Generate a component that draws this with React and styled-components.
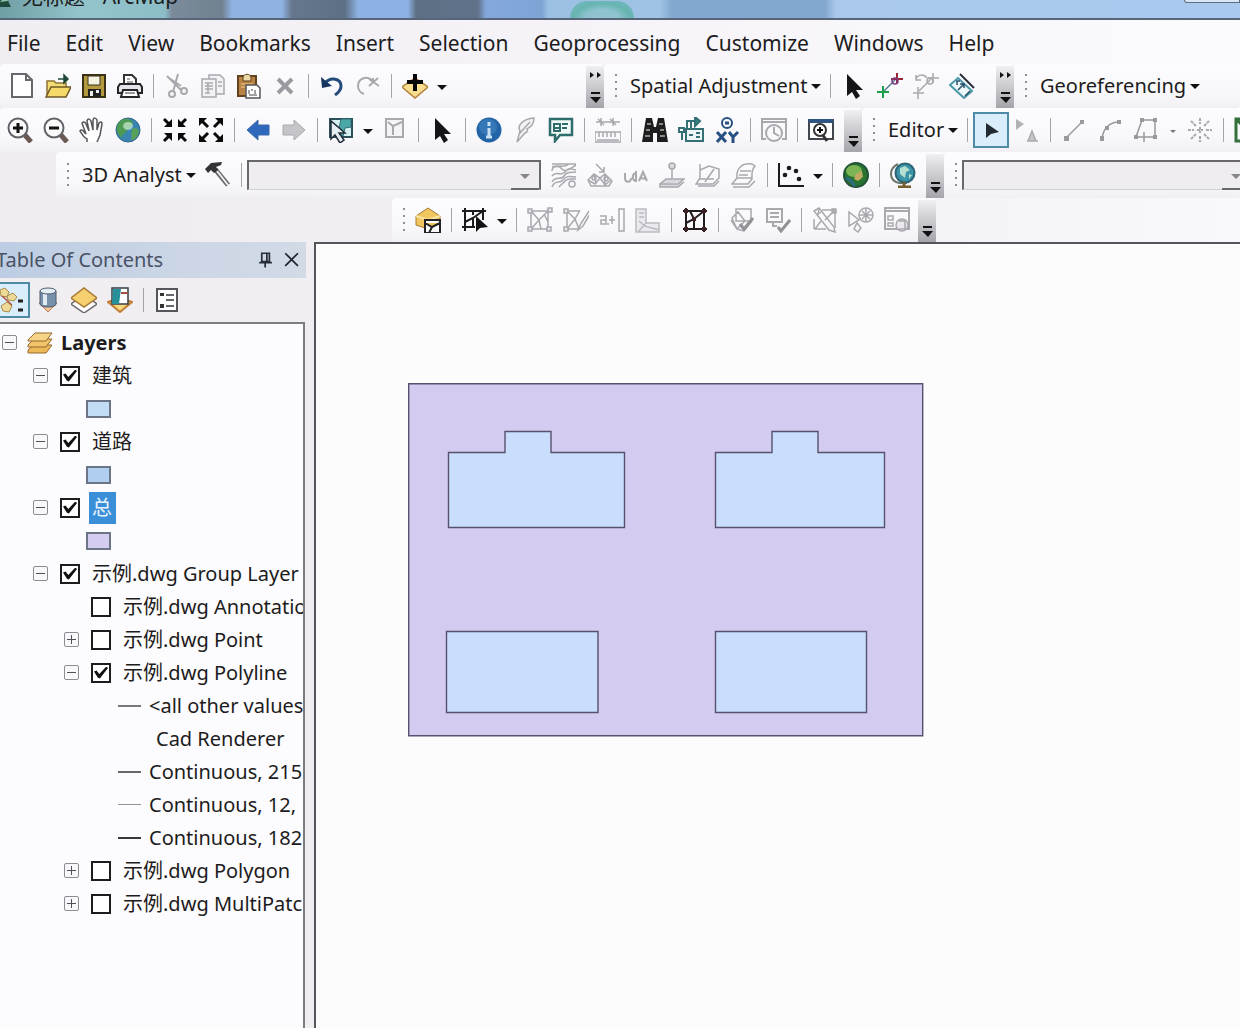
import { useState } from 'react';
import styled, { createGlobalStyle } from 'styled-components';

const GlobalStyle = createGlobalStyle`
  * {
    box-sizing: border-box;
  }

  body {
    margin: 0;
    background: #f0eef1;
    color: #1c1c20;
    font-family: "Noto Sans", "Noto Sans CJK SC", sans-serif;
    font-size: 20px;
    line-height: 28px;
  }

  button, select, input {
    margin: 0;
    padding: 0;
    border: 0;
    border-radius: 0;
    background: none;
    color: inherit;
    font: inherit;
  }
`;

const Window = styled.div`
  display: flex;
  flex-direction: column;
  min-height: 100vh;
  overflow: hidden;
`;

const TitleBar = styled.header`
  display: flex;
  align-items: flex-end;
  justify-content: space-between;
  height: 20px;
  overflow: hidden;
  border-bottom: 2px solid #566577;
  background: linear-gradient(90deg,
    #6f9fa5 0, #94c4cb 80px, #8cbec8 165px, #7b8b9b 172px, #71818f 222px,
    #8fb2e2 232px, #8fb2e2 282px, #66778c 292px, #5d7086 345px,
    #8db1e3 358px, #8db1e3 408px, #5d7086 416px, #5f7289 478px,
    #84a8dc 486px, #7ea4d6 542px, #9bc0e4 548px, #a0c3e5 660px,
    #83a8cf 672px, #83a8cf 825px, #a9c8ec 836px, #a9c9f0 100%);
`;

const TitleText = styled.h1`
  display: flex;
  align-items: center;
  gap: 10px;
  margin: 0 0 8px;
  font-size: 21px;
  font-weight: 400;
  white-space: pre;
`;

const TitleGlow = styled.span`
  flex: none;
  width: 64px;
  height: 17px;
  margin-left: 392px;
  margin-right: auto;
  border-radius: 32px 32px 0 0;
  background: radial-gradient(ellipse at bottom, #8fc3d0 0 35%, #66b5b0 60%, #7db8cb 100%);
`;

const WindowButtons = styled.div`
  display: flex;
  align-self: flex-start;
  width: 56px;
  height: 3px;
  border: 1px solid #5d6d80;
  border-top: 0;
  border-radius: 0 0 0 5px;
  background: #d9e6f5;
`;

const MenuBar = styled.nav`
  display: flex;
  height: 44px;
  padding: 2px 0 0 7px;
  gap: 25px;
  background: linear-gradient(90deg, #f0eef2, #f6f4f8 50%, #fbfafc);
`;

const MenuItem = styled.button`
  font-size: 21px;
  white-space: nowrap;
`;

const ToolbarRow = styled.div`
  display: flex;
  height: ${p => p.$height || 44}px;
  padding-left: ${p => p.$indent || 0}px;
  overflow: hidden;
  background: linear-gradient(90deg, #efedf0, #f1eff3 60%, #f9f8fb);
`;

const Toolbar = styled.div`
  display: flex;
  flex: ${p => (p.$grow ? '1 0 auto' : 'none')};
  align-items: center;
  width: ${p => (p.$width ? `${p.$width}px` : 'auto')};
  padding-left: ${p => p.$start || 0}px;
  border-radius: 4px;
  background: linear-gradient(#fcfbfd, #f8f7fa 70%, #f1eff3);
`;

const ToolButton = styled.button`
  display: flex;
  flex: none;
  align-items: center;
  justify-content: center;
  width: 36px;
  height: 36px;
  border: ${p => (p.$active ? '2px solid #4f8ba6' : '0')};
  background: ${p => (p.$active ? '#d9eefa' : 'none')};
`;

const Separator = styled.span`
  flex: none;
  width: 1px;
  height: 24px;
  margin: 0 5px;
  background: #a5a4aa;
`;

const Grip = styled.span`
  flex: none;
  width: 2px;
  height: 24px;
  margin: 0 ${p => (p.$tight ? 5 : 11)}px 0 11px;
  background: repeating-linear-gradient(#8d8d95 0 2px, transparent 2px 7px);
`;

const LabelButton = styled.button`
  display: flex;
  flex: none;
  align-items: center;
  gap: 4px;
  padding: 0 4px 0 2px;
  font-size: 20px;
  white-space: nowrap;

  &::after {
    content: '';
    border: 5px solid transparent;
    border-top-color: #111;
    border-bottom: 0;
  }
`;

const DropButton = styled.button`
  flex: none;
  width: 18px;
  height: 36px;

  &::after {
    content: '';
    display: inline-block;
    vertical-align: middle;
    border: ${p => (p.disabled ? 3 : 5)}px solid transparent;
    border-top-color: ${p => (p.disabled ? '#77767c' : '#111')};
    border-bottom: 0;
  }
`;

const OverflowButton = styled.button`
  display: flex;
  flex: none;
  flex-direction: column;
  align-items: center;
  align-self: stretch;
  justify-content: ${p => (p.$more ? 'space-between' : 'flex-end')};
  width: 18px;
  margin: 2px 0 0 auto;
  padding: 6px 0 4px;
  background: linear-gradient(#f0eff2, #c9c9ce 50%, #a4a5ab);
`;

const ComboWrap = styled.div`
  display: flex;
  flex: none;
  align-items: center;
  justify-content: flex-end;
  position: relative;
  width: ${p => p.$width}px;
  height: 30px;
  margin-right: 5px;
  border-top: 2px solid #68686e;
  border-left: 2px solid #68686e;
  border-right: 2px solid #68686e;
  border-bottom: 1px solid #d0cfd4;
  background: #efedf0;
`;

const ComboSelect = styled.select`
  flex: 1;
  height: 100%;
  appearance: none;
`;

const ComboArrow = styled.span`
  position: absolute;
  right: 0;
  bottom: -1px;
  width: 28px;
  height: 20px;
  border-bottom: 2px solid #68686e;
  pointer-events: none;

  &::after {
    content: '';
    display: block;
    width: 0;
    margin: 4px auto 0;
    border: 5px solid transparent;
    border-top-color: #85858c;
    border-bottom: 0;
  }
`;

const Workspace = styled.main`
  display: flex;
  flex: 1;
`;

const ContentsPanel = styled.aside`
  display: flex;
  flex: none;
  flex-direction: column;
  width: 306px;
  margin-right: 8px;
`;

const PanelHeader = styled.div`
  display: flex;
  align-items: center;
  height: 36px;
  padding-right: 1px;
  overflow: hidden;
  background: linear-gradient(90deg, #bccde3, #ccd6e5 60%, #d2dae6);
`;

const PanelTitle = styled.h2`
  flex: 1;
  margin: 0 0 0 -4px;
  color: #4a5265;
  font-size: 20px;
  font-weight: 400;
`;

const PanelButton = styled.button`
  display: flex;
  align-items: center;
  justify-content: center;
  width: 26px;
  height: 28px;
`;

const PanelTools = styled.div`
  display: flex;
  align-items: center;
  height: 44px;
  margin-left: -6px;
`;

const Tree = styled.ul`
  flex: 1;
  width: 305px;
  margin: 0;
  padding: 2px 0 0;
  overflow: hidden;
  border-top: 2px solid #7c7c83;
  border-right: 2px solid #7c7c83;
  background: #fcfbfd;
  list-style: none;
`;

const TreeRow = styled.li`
  display: flex;
  align-items: center;
  gap: ${p => p.$gap || 12}px;
  height: 33px;
  padding-left: ${p => p.$indent}px;
  white-space: nowrap;
`;

const Expander = styled.button`
  flex: none;
  width: 15px;
  height: 15px;
  border: 1px solid #8c8c94;
  border-radius: 2px;
  background:
    linear-gradient(#50505c, #50505c) center / 9px 1px no-repeat,
    linear-gradient(#50505c, #50505c) center / 1px ${p => (p.$open ? 0 : 9)}px no-repeat,
    #f8f7fa;
`;

const ExpanderSpace = styled.span`
  flex: none;
  width: 15px;
`;

const CheckBox = styled.input`
  display: flex;
  flex: none;
  align-items: center;
  justify-content: center;
  width: 20px;
  height: 20px;
  border: 2px solid #1d1d1f;
  background: #fff;
  appearance: none;

  &:checked::before {
    content: '';
    width: 14px;
    height: 12px;
    background: #111;
    clip-path: polygon(0 42%, 18% 34%, 38% 62%, 88% 0, 100% 12%, 42% 100%, 28% 94%);
  }
`;

const LayerLabel = styled.label`
  margin-left: ${p => (p.$selected ? '-3px' : '0')};
  padding: ${p => (p.$selected ? '2px 4px 2px 3px' : '0')};
  background: ${p => (p.$selected ? '#3b8fd8' : 'none')};
  color: ${p => (p.$selected ? '#e8f5ff' : 'inherit')};
`;

const GroupLabel = styled.strong`
  margin-left: -2px;
  font-weight: 700;
`;

const Swatch = styled.span`
  width: 25px;
  height: 18px;
  border: 2px solid #6c7488;
  background: ${p => p.$color};
`;

const LineSymbol = styled.span`
  flex: none;
  width: 23px;
  height: ${p => p.$weight}px;
  background: ${p => p.$color};
`;

const MapView = styled.section`
  flex: 1;
  padding: 139px 0 0 92px;
  overflow: hidden;
  border-top: 2px solid #55555b;
  border-left: 2px solid #55555b;
  background: #fcfcfd;
`;

const G = '#a9a8ae';

const ICONS = {
  newDoc: <path d="M3 1h14l6 6v17H3zM17 1v6h6" fill="#fff" stroke="#67676d" strokeWidth="2" />,
  open: (
    <>
      <path d="M2 24V8h7l2 2h10v5" fill="#f4dc74" stroke="#8b7336" strokeWidth="1.5" />
      <path d="M1 24l5-10h20l-5 10z" fill="#f7d96a" stroke="#6f5a25" strokeWidth="1.5" />
      <path d="M13 6h8M19 2l4 4-4 4z" fill="#1f4a38" stroke="#1f4a38" strokeWidth="1.5" />
    </>
  ),
  save: (
    <>
      <path d="M2 2h22v22H2z" fill="#b39a3e" stroke="#3a3117" strokeWidth="2" />
      <path d="M7 3h12v9H7z" fill="#f7f3e2" stroke="#3a3117" />
      <path d="M7 16h13v8H7z" fill="#222" />
      <path d="M9 18h3v5H9zM15 17h3v3h-3z" fill="#eee" />
    </>
  ),
  print: (
    <>
      <path d="M7 12V2h8l4 4v6" fill="#fff" stroke="#333" strokeWidth="2" />
      <path d="M10 6h3M10 9h6" stroke="#555" />
      <path d="M3 11h20l2 3v6H1v-6z" fill="#e4e4e8" stroke="#26262a" strokeWidth="2" />
      <path d="M6 17h14l2 7H4z" fill="#fff" stroke="#26262a" strokeWidth="2" />
      <path d="M8 20h10" stroke="#333" />
    </>
  ),
  cut: (
    <g fill="none" stroke={G} strokeWidth="2">
      <path d="M3 3l15 15M14 1l-5 18M5 5l12 8" />
      <circle cx="8" cy="21" r="3" />
      <circle cx="20" cy="18" r="3" />
    </g>
  ),
  copy: (
    <g fill="#f3f2f5" stroke={G} strokeWidth="1.5">
      <path d="M9 2h11l4 4v15H9z" />
      <path d="M2 6h14v18H2zM5 10h8M5 13h8M5 16h8M5 20h5M18 9h4M18 13h4M8 10v9" />
    </g>
  ),
  paste: (
    <>
      <path d="M2 3h18v20H2z" fill="#b98344" stroke="#60421f" strokeWidth="2" />
      <path d="M7 5c0-5 8-5 8 0v3H7z" fill="#ead8a4" stroke="#60421f" />
      <path d="M5 11h12M5 14h4" stroke="#f0cf95" />
      <path d="M10 12h11l3 3v10H10z" fill="#fff" stroke="#55555a" strokeWidth="1.5" />
      <path d="M13 17v4M16 16v2M19 17v4M13 22h8" stroke="#444" />
    </>
  ),
  remove: <path d="M6 6l14 14M20 6L6 20" stroke="#9b9aa1" strokeWidth="4" />,
  undo: (
    <>
      <path d="M6 10C12 3 22 6 22 13c0 4-3 7-6 9" fill="none" stroke="#244a7b" strokeWidth="3" />
      <path d="M2 4l1 11 10-2z" fill="#17345e" />
    </>
  ),
  redo: (
    <>
      <path d="M17 7C11 2 3 6 3 13c0 4 3 7 6 8" fill="none" stroke={G} strokeWidth="2" />
      <path d="M14 6l10 7M23 5l-9 8M18 5v4" stroke={G} strokeWidth="2" />
    </>
  ),
  addData: (
    <>
      <path d="M0 14l13-9 13 9-13 11z" fill="#f8dd8e" stroke="#b28138" strokeWidth="1.5" />
      <path d="M13 1v17M5 9h16" stroke="#050505" strokeWidth="4" />
    </>
  ),
  pointer: <path d="M6 1v22l5-4 4 7 4-3-4-6h7z" fill="#151517" />,
  linkAdd: (
    <>
      <path d="M6 19L18 7" stroke="#53798a" strokeWidth="1.5" />
      <path d="M0 19h12M6 13v12" stroke="#1ea04a" strokeWidth="2" />
      <path d="M14 6h12M20 0v11" stroke="#9c2437" strokeWidth="2" />
      <circle cx="18" cy="8" r="3" fill="none" stroke="#7a3d86" strokeWidth="1.5" />
    </>
  ),
  linkEdit: (
    <g fill="none" stroke={G} strokeWidth="1.5">
      <path d="M0 20h11M5 14v12M6 18l12-12M15 5h11M20 0v10M3 6c2-5 8-5 11-1M3 2v5h5" />
      <circle cx="17" cy="8" r="3" />
    </g>
  ),
  rotateLink: (
    <>
      <path d="M1 12l8-7 14 13-8 7z" fill="#eef8fa" stroke="#4c98aa" strokeWidth="2" />
      <path d="M11 1l14 14" stroke="#29303d" strokeWidth="2" />
      <path d="M9 17l6-6M11 11h4v4M16 23l5-5M8 12V8h3" stroke="#28506b" strokeWidth="1.5" />
    </>
  ),
  zoomIn: (
    <>
      <path d="M17 17l7 8" stroke="#695a55" strokeWidth="5" />
      <circle cx="11" cy="11" r="9.5" fill="#fafafa" stroke="#626269" strokeWidth="2" />
      <path d="M11 6v10M6 11h10" stroke="#111" strokeWidth="3" />
    </>
  ),
  zoomOut: (
    <>
      <path d="M17 17l7 8" stroke="#695a55" strokeWidth="5" />
      <circle cx="11" cy="11" r="9.5" fill="#fafafa" stroke="#626269" strokeWidth="2" />
      <path d="M6 11h10" stroke="#111" strokeWidth="3" />
    </>
  ),
  pan: (
    <path
      d="M8 25v-3c-3-1-5-5-7-8 1-2 3-1 5 2l1 1-4-11c1-2 3-1 4 1l3 7-2-10c1-3 3-2 4 0l2 9V3c1-3 3-2 4 0v10l2-7c2-2 3-1 3 1l-2 11-3 7"
      fill="#fff"
      stroke="#55555b"
      strokeWidth="1.5"
    />
  ),
  globe: (
    <>
      <circle cx="13" cy="13" r="12" fill="#3a84b1" stroke="#31678b" />
      <path d="M5 4c5-4 12-2 13 2-2 2-1 4-4 5s-1 4-4 5-3 5-3 5C1 17 0 9 5 4z" fill="#4d9a52" />
      <path d="M18 11c3 0 6 1 6 3-1 6-4 9-8 9 1-4-1-8 2-12z" fill="#57a05a" />
      <ellipse cx="13" cy="9" rx="5" ry="4" fill="#c2e6ce" opacity="0.75" />
    </>
  ),
  shrink: (
    <>
      <path d="M2 2l6 6M24 2l-6 6M2 24l6-6M24 24l-6-6" stroke="#0a0a0a" strokeWidth="3" />
      <path d="M10 2v8H2zM16 2v8h8zM10 24v-8H2zM16 24v-8h8z" fill="#0a0a0a" />
    </>
  ),
  expand: (
    <>
      <path d="M3 3l7 7M23 3l-7 7M3 23l7-7M23 23l-7-7" stroke="#0a0a0a" strokeWidth="3" />
      <path d="M1 1h8L1 9zM25 1h-8l8 8zM1 25h8l-8-8zM25 25h-8l8-8z" fill="#0a0a0a" />
    </>
  ),
  back: <path d="M2 13L13 3v5h11v10H13v5z" fill="#2e68bd" stroke="#3f6aa8" />,
  forward: <path d="M24 13L13 3v5H2v10h11v5z" fill="#c5c4c9" stroke="#aaa9af" />,
  selectFeature: (
    <>
      <path d="M2 2h22v18H2z" fill="#d6eff0" stroke="#2d4f5c" strokeWidth="2" />
      <path d="M13 2h10v8l-6 1-2 8-5-3z" fill="#4aa9a8" stroke="#2d6d74" />
      <path d="M3 4v18l4-4 5 8 4-3-5-7h6z" fill="#e5eef2" stroke="#202c39" strokeWidth="1.5" />
    </>
  ),
  clearSelect: (
    <g fill="#f4f3f6" stroke={G} strokeWidth="2">
      <path d="M4 2h17v18H4zM6 5l5 4 9-4M11 9v9" />
    </g>
  ),
  identify: (
    <>
      <circle cx="13" cy="13" r="12.5" fill="#2364a6" />
      <ellipse cx="12" cy="10" rx="9" ry="8" fill="#4384c3" opacity="0.6" />
      <path d="M13 5v4M13 11v9M10 20h6" stroke="#c9e0f3" strokeWidth="3" />
    </>
  ),
  hyperlink: <path d="M22 1C10 2 5 9 8 14l-3 11 8-9c3-1 3-3 2-4l3-2c2-1 4-5 4-9zM7 17L18 5" fill="#f1f0f3" stroke={G} strokeWidth="1.5" />,
  popup: (
    <>
      <path d="M2 2h22v16H12l-5 6v-6H2z" fill="#f2faf8" stroke="#2e6d6b" strokeWidth="2.5" />
      <path d="M6 7h6v7H6zM14 7h6M14 11h5M7 11h4" fill="none" stroke="#2e6d6b" strokeWidth="2" />
    </>
  ),
  measure: (
    <g fill="none" stroke={G} strokeWidth="1.5">
      <path d="M1 5h24M6 1v8M3 2l6 6M18 1v8M15 2l6 6M0 15h26v10H0zM4 15v5M8 15v5M12 15v5M16 15v5M20 15v5M2 23h22" />
    </g>
  ),
  find: (
    <>
      <path d="M4 1h6l2 9h2l2-9h6l4 24H15v-9h-4v9H0z" fill="#1d1c1e" />
      <path d="M5 7h4M4 13h4M3 19h5M17 7h4M18 13h4M18 19h5" stroke="#8d8a86" strokeWidth="2" />
    </>
  ),
  route: (
    <g fill="none" stroke="#347076" strokeWidth="2">
      <path d="M1 11h5v4H1zM4 15v8M9 11V4h10M13 5v7" />
      <path d="M17 0l5 4-5 5z" fill="#2f8577" />
      <path d="M8 12h17v12H8z" fill="#edf7f7" />
      <path d="M11 18h4M18 16h4M18 20h4" />
    </g>
  ),
  goToXY: (
    <g fill="none" stroke="#275082" strokeWidth="3">
      <circle cx="13" cy="6" r="5" strokeWidth="2" />
      <path d="M11 6h4M3 15l9 10M12 15L3 25M15 15l4 5 5-5M19 20v6" />
    </g>
  ),
  time: (
    <g fill="none" stroke={G} strokeWidth="2">
      <path d="M5 22H1V2h24v20h-4M1 5h24" />
      <circle cx="13" cy="16" r="8" />
      <path d="M13 10v6l5 3" />
    </g>
  ),
  viewer: (
    <>
      <path d="M1 3h24v19H1z" fill="#fff" stroke="#42464f" strokeWidth="2" />
      <path d="M1 4h24" stroke="#2f5583" strokeWidth="4" />
      <path d="M14 17l5 7" stroke="#333" strokeWidth="3" />
      <circle cx="12" cy="13" r="6" fill="#fff" stroke="#333" strokeWidth="2" />
      <path d="M12 10v6M9 13h6" stroke="#111" strokeWidth="2" />
    </>
  ),
  editTool: <path d="M8 6v15l5-4 8-2z" fill="#242a31" />,
  editNote: (
    <>
      <path d="M2 2v11l8-6z" fill="#b2b0b5" />
      <path d="M14 24l4-10 4 10zM13 24h11" fill="#c6c5c9" stroke={G} strokeWidth="1.5" />
    </>
  ),
  line: (
    <>
      <path d="M5 21L21 5" stroke="#99989f" strokeWidth="1.5" />
      <path d="M3 19h5v5H3zM19 3h4v4h-4z" fill="#99989f" />
    </>
  ),
  arc: (
    <>
      <path d="M5 22C6 12 12 5 22 5" fill="none" stroke="#99989f" strokeWidth="1.5" />
      <path d="M3 19h4v5H3zM8 9h4v4H8zM20 3h4v4h-4z" fill="#99989f" />
    </>
  ),
  trapezoid: (
    <>
      <path d="M3 20L9 3h13v17M3 20h4M16 20h6M11 15v10M7 20h9" fill="none" stroke="#99989f" strokeWidth="1.5" />
      <path d="M7 1h4v4H7zM20 1h4v4h-4zM1 18h4v4H1zM20 18h4v4h-4z" fill="#99989f" />
    </>
  ),
  burst: (
    <path
      d="M13 1v6M13 19v6M1 13h6M19 13h6M4 4l5 5M22 4l-5 5M4 22l5-5M22 22l-5-5M10 13h6M13 10v6"
      stroke={G}
      strokeWidth="2"
      strokeDasharray="3 1"
    />
  ),
  greenBox: <path d="M2 2h22v22H2zM2 2l22 22" fill="none" stroke="#34703c" strokeWidth="3" />,
  hammer: (
    <>
      <path d="M10 7l13 16" stroke="#66666a" strokeWidth="5" />
      <path d="M12 9l11 14" stroke="#f2f0ee" strokeWidth="2" />
      <path d="M0 7l6-6 11-1-1 3-5 2 2 3-4 3-3-3-3 3z" fill="#333336" />
    </>
  ),
  contour: (
    <g fill="none" stroke={G} strokeWidth="1.5">
      <path d="M1 9c0-5 7-6 10-2s9-1 14-4M1 14c4-6 9 1 13-4s6-3 11-2M1 20c4-7 9-1 12-6s7-3 12-4M1 25c3-8 8-3 11-7s5-4 13-3M8 25c2-3 4-3 6-6s5-2 11-2M1 2h24M1 5c8-3 12 2 17-3" />
      <circle cx="21" cy="22" r="3" />
    </g>
  ),
  steepPath: (
    <g fill="none" stroke={G} strokeWidth="1.5">
      <path d="M9 2l8 8M17 5v5h-5M1 18l6-6 6 4 5-4 7 7-3 5H4zM1 18l7 4 5-6 5 7 6-5M7 12l2 10M18 12v11" />
      <circle cx="7" cy="16" r="2" />
      <circle cx="19" cy="17" r="2" />
    </g>
  ),
  sight: (
    <g fill="none" stroke={G} strokeWidth="2">
      <path d="M2 11v5c0 5 6 5 6 0M12 11c-4 3-2 8 1 8V9M16 19l4-9 4 9M17 16l7 1" />
    </g>
  ),
  interpolatePoint: (
    <g fill="#d9d8dd" stroke={G} strokeWidth="1.5">
      <circle cx="13" cy="4" r="3" />
      <path d="M13 7v10M7 17h18l-6 5H1zM1 22v3h18l6-5" />
    </g>
  ),
  interpolateLine: (
    <g fill="none" stroke={G} strokeWidth="1.5">
      <path d="M5 2v14l-4 6h17l6-6V7L14 4l-9 4M4 17h15M10 20l9-13M3 24h16l5-5" />
    </g>
  ),
  interpolatePolygon: (
    <g fill="none" stroke={G} strokeWidth="1.5">
      <path d="M6 16C5 5 12 1 21 2l3 2c-4 4-3 8-3 13l-4 5H1l5-6h15M9 9h11M8 13h9M2 25h16l6-6" />
    </g>
  ),
  scatter: (
    <>
      <path d="M1 1v23h25" fill="none" stroke="#1b1b1e" strokeWidth="2" />
      <circle cx="7" cy="13" r="2.300" fill="#1b1b1e" />
      <circle cx="11" cy="6" r="2.300" fill="#1b1b1e" />
      <circle cx="18" cy="9" r="2.300" fill="#1b1b1e" />
      <circle cx="21" cy="17" r="2.300" fill="#1b1b1e" />
    </>
  ),
  scene: (
    <>
      <circle cx="13" cy="13" r="12" fill="#28732f" stroke="#245238" strokeWidth="2" />
      <ellipse cx="11" cy="9" rx="8" ry="6" fill="#89bf58" opacity="0.85" />
      <path d="M13 12l6-3 1 6-5 4-4-2z" fill="#c1a964" />
      <path d="M3 16c5 1 6 5 9 8" stroke="#2b6b80" strokeWidth="3" fill="none" />
    </>
  ),
  arcGlobe: (
    <>
      <path d="M8 2C-2 7-1 19 9 21h8" fill="none" stroke="#6d786d" strokeWidth="2" />
      <circle cx="15" cy="11" r="9.5" fill="#3b93a8" stroke="#2e6576" strokeWidth="2" />
      <path d="M10 6l5-2 5 4-4 2-1 6-5-4zM19 12l3 1-3 4z" fill="#b5dfcf" />
      <path d="M14 20v4M8 25h13" stroke="#775d2e" strokeWidth="3" />
    </>
  ),
  topologyBox: (
    <>
      <path d="M1 9l12-8 12 8v12l-9 2L1 18z" fill="#f1c65e" stroke="#a87b30" />
      <path d="M1 9l12 4 12-4" fill="none" stroke="#fae5a3" strokeWidth="2" />
      <path d="M10 13h15v13H10zM10 16l7 4 8-4M17 20l-3 6" fill="#fff" stroke="#222" strokeWidth="2" />
    </>
  ),
  topologyEdit: (
    <>
      <path d="M0 4h24M0 20h13M3 1v23M21 1v12M3 15l8-4 10-7M11 11v9M11 4v4" fill="none" stroke="#1b1b1e" strokeWidth="2" />
      <path d="M14 9v16l4-4 8-1z" fill="#111" />
    </>
  ),
  topoA: (
    <g fill="none" stroke={G} strokeWidth="1.5">
      <path d="M3 4h20M3 22h20M4 2v22M21 2v22M4 4l8 9-8 9M12 13l9-9M12 13l2 9M17 7l4 8" />
      <path d="M1 2h4v4H1zM1 20h4v4H1zM21 1h4v4h-4zM20 20h4v4h-4z" fill="#e8e7ea" />
    </g>
  ),
  topoB: (
    <g fill="none" stroke={G} strokeWidth="1.5">
      <path d="M2 4h14M2 22h15M4 2v22M4 4l8 8-8 10M12 12l5-9M12 12l4 10M26 4L17 18l-2 5 5-4 7-12" />
      <path d="M1 2h4v4H1zM1 20h4v4H1z" fill="#e8e7ea" />
    </g>
  ),
  alignEdge: (
    <g fill="none" stroke={G} strokeWidth="1.5">
      <path d="M1 9h6v8H2v-4h5M10 13h6M13 9v8M20 2h5v22h-5zM8 17h2" />
    </g>
  ),
  corner: (
    <g fill="#eae9ed" stroke="#bcbbc1" strokeWidth="1.5">
      <path d="M1 2h10v14h13v9H1zM4 6h5M4 10h5M4 14l6 5 14 4M11 16L3 25" />
    </g>
  ),
  planarize: (
    <>
      <path d="M1 4h24M1 22h24M4 1v24M22 1v24M4 16l8-4 10-8M12 12v10M12 12l-4-8" fill="none" stroke="#231c1e" strokeWidth="2" />
      <path d="M2 2h4v4H2zM20 2h4v4h-4zM2 20h4v4H2zM20 20h4v4h-4zM10 10h4v4h-4z" fill="#3a2225" />
    </>
  ),
  validate: (
    <g fill="none" stroke={G} strokeWidth="1.5">
      <path d="M7 2h15v12H7zM3 11l6-6 7 9-8 8zM2 13l6 9 7 2 8-10" />
      <path d="M11 17l4 5 9-11" stroke="#929198" strokeWidth="3" />
    </g>
  ),
  validateList: (
    <g fill="none" stroke={G} strokeWidth="2">
      <path d="M2 2h15v13H2zM5 6h9M5 10h9M8 15v4h4" />
      <path d="M13 20l3 4 9-11" stroke="#929198" strokeWidth="3" />
    </g>
  ),
  fixError: (
    <g fill="none" stroke={G} strokeWidth="1.5">
      <path d="M2 22V12M10 3h13v18M2 22h12M13 13l9-9M3 22l6-8M20 2h4v4h-4z" />
      <path d="M2 4l5-3 15 19 1 5-6-2zM7 1l-1 6M5 8l4-3" />
    </g>
  ),
  inspectError: (
    <g fill="none" stroke={G} strokeWidth="1.5">
      <path d="M1 5v14l10-6zM9 16l-3 6 4 3 3-4z" />
      <circle cx="18" cy="8" r="7" />
      <path d="M14 4l8 8M22 4l-8 8M18 1v14M11 8h14" />
    </g>
  ),
  errorTable: (
    <g fill="none" stroke={G} strokeWidth="1.5">
      <path d="M1 1h24v21H1zM1 4h24" strokeWidth="2" />
      <path d="M4 9h5v4H4zM4 16h5v3H4z" />
      <circle cx="18" cy="18" r="6" fill="#eceaee" />
      <path d="M15 14h6v8h-6" />
    </g>
  ),
  listDrawing: (
    <>
      <path d="M1 3l5-2 4 4-2 5-6-1zM8 9l6-3 4 4-3 4-6-1zM2 19l6-4 5 4-3 6-6-1z" fill="#efd996" stroke="#a88d4b" />
      <path d="M3 9l10 9" stroke="#b3523e" strokeWidth="1.5" />
      <path d="M19 14h5M19 23h5" stroke="#222" strokeWidth="3" />
    </>
  ),
  listSource: (
    <>
      <path d="M4 16l9 9 9-9z" fill="#f0c59b" stroke="#b97f50" />
      <path d="M5 4v13c0 4 16 4 16 0V4z" fill="#7791ab" stroke="#4d5c6e" />
      <path d="M8 6v12h4V6z" fill="#dfeaf3" />
      <ellipse cx="13" cy="4" rx="8" ry="3" fill="#e5edf4" stroke="#4d5c6e" />
    </>
  ),
  listVisible: (
    <>
      <path d="M0 17l13-9 13 9-13 9z" fill="#fff" stroke="#68686c" strokeWidth="1.5" />
      <path d="M0 11l13-10 13 10-13 9z" fill="#f5cf70" stroke="#a77a34" strokeWidth="1.5" />
    </>
  ),
  listSelection: (
    <>
      <path d="M1 15l12 10 12-10-3-1H4z" fill="#f8d67b" stroke="#c07d34" strokeWidth="2" />
      <path d="M5 1h16v16H5z" fill="#fff" stroke="#363d45" strokeWidth="1.5" />
      <path d="M6 2h8l-2 15H5z" fill="#27919b" />
      <path d="M14 6h7" stroke="#a64d43" strokeWidth="2" />
    </>
  ),
  options: (
    <>
      <path d="M3 2h20v22H3z" fill="#fff" stroke="#55555b" strokeWidth="2" />
      <path d="M6 6h4v3H6zM6 17h4v4H6z" fill="#333" />
      <path d="M12 8h8M12 13h8M12 19h8" stroke="#66666c" strokeWidth="2" />
    </>
  ),
  layerStack: (
    <>
      <path d="M1 20l6-5h18l-6 8H1z" fill="#eeb957" stroke="#94682c" />
      <path d="M1 15l6-6h18l-6 8H1z" fill="#f1c46a" stroke="#94682c" />
      <path d="M1 10l7-7h17l-6 8H1z" fill="#f6d487" stroke="#94682c" />
    </>
  ),
  pin: <path d="M8 5h9v10H8zM14 5v10M5 16h15M12 16v6" fill="none" stroke="#272c38" strokeWidth="2" />,
  close: <path d="M5 5l15 15M20 5L5 20" stroke="#20242e" strokeWidth="2" />,
  more: <path d="M1 0v6l4-3zM8 0v6l4-3z" fill="#111" />,
  overflow: (
    <>
      <path d="M2 2h9" stroke="#111" strokeWidth="2" />
      <path d="M1 6h11l-5 6z" fill="#111" />
    </>
  ),
};

const Icon = ({ name, size = 26, box = 26 }) => (
  <svg width={size} height={size} viewBox={`0 0 ${box} ${box}`} fill="none" aria-hidden="true">
    {ICONS[name]}
  </svg>
);

// '|' is a separator, 'v' a drop-down arrow ('-' when disabled), anything else an icon name
const Tools = ({ items, active }) => items.map((item, i) => {
  if (item === '|') return <Separator key={i} />;
  if (item === 'v' || item === '-') return <DropButton key={i} disabled={item === '-'} aria-label="More choices" />;
  return (
    <ToolButton key={i} aria-label={item} $active={item === active}>
      <Icon name={item} />
    </ToolButton>
  );
});

const Overflow = ({ more }) => (
  <OverflowButton $more={more} aria-label="Toolbar options">
    {more && <Icon name="more" size={13} box={13} />}
    <Icon name="overflow" size={13} box={13} />
  </OverflowButton>
);

const Combo = ({ label, width }) => (
  <ComboWrap $width={width}>
    <ComboSelect aria-label={label} />
    <ComboArrow />
  </ComboWrap>
);

const MENUS = ['File', 'Edit', 'View', 'Bookmarks', 'Insert', 'Selection', 'Geoprocessing', 'Customize', 'Windows', 'Help'];

const LAYERS = [
  { type: 'layer', id: 'building', level: 1, open: true, checked: true, text: '建筑' },
  { type: 'swatch', color: '#c3dcf5' },
  { type: 'layer', id: 'road', level: 1, open: true, checked: true, text: '道路' },
  { type: 'swatch', color: '#b0cff0' },
  { type: 'layer', id: 'total', level: 1, open: true, checked: true, text: '总', selected: true },
  { type: 'swatch', color: '#d4cdef' },
  { type: 'layer', id: 'group', level: 1, open: true, checked: true, text: '示例.dwg Group Layer' },
  { type: 'layer', id: 'annotation', level: 2, leaf: true, text: '示例.dwg Annotation' },
  { type: 'layer', id: 'point', level: 2, text: '示例.dwg Point' },
  { type: 'layer', id: 'polyline', level: 2, open: true, checked: true, text: '示例.dwg Polyline' },
  { type: 'symbol', weight: 2, color: '#77777c', text: '<all other values>' },
  { type: 'heading', text: 'Cad Renderer' },
  { type: 'symbol', weight: 2, color: '#66666b', text: 'Continuous, 215' },
  { type: 'symbol', weight: 1, color: '#9a8f99', text: 'Continuous, 12,' },
  { type: 'symbol', weight: 2, color: '#38383c', text: 'Continuous, 182' },
  { type: 'layer', id: 'polygon', level: 2, text: '示例.dwg Polygon' },
  { type: 'layer', id: 'multipatch', level: 2, text: '示例.dwg MultiPatch' },
];

const LayerRow = ({ layer }) => {
  const [checked, setChecked] = useState(Boolean(layer.checked));

  return (
    <TreeRow $indent={2 + layer.level * 31}>
      {layer.leaf ? <ExpanderSpace /> : <Expander $open={layer.open} aria-label={`Expand ${layer.text}`} />}
      <CheckBox type="checkbox" id={layer.id} checked={checked} onChange={() => setChecked(!checked)} />
      <LayerLabel htmlFor={layer.id} $selected={layer.selected}>{layer.text}</LayerLabel>
    </TreeRow>
  );
};

const renderRow = (row, i) => {
  switch (row.type) {
    case 'swatch':
      return <TreeRow key={i} $indent={86}><Swatch $color={row.color} /></TreeRow>;
    case 'symbol':
      return (
        <TreeRow key={i} $indent={118} $gap={8}>
          <LineSymbol $weight={row.weight} $color={row.color} />
          <span>{row.text}</span>
        </TreeRow>
      );
    case 'heading':
      return <TreeRow key={i} $indent={156}>{row.text}</TreeRow>;
    default:
      return <LayerRow key={i} layer={row} />;
  }
};

const MapDrawing = () => (
  <svg width="516" height="354" viewBox="0 0 516 354" role="img" aria-label="Site plan">
    <g stroke="#56526e" strokeWidth="1.4">
      <path d="M.7.7h514v352H.7z" fill="#d4ccf0" />
      <g fill="#c9ddfc">
        <path d="M40.5 69.500h56.500v-21h46v21h73.500v75h-176z" />
        <path d="M307.500 69.500h56.500v-21h46v21h66.500v75h-169z" />
        <path d="M38.500 248.500h151.500v81h-151.500z" />
        <path d="M307.500 248.500h151v81h-151z" />
      </g>
    </g>
  </svg>
);

const App = () => {
  return (
    <>
      <GlobalStyle />
      <Window>
        <TitleBar>
          <TitleText>
            <svg width="12" height="26" viewBox="0 0 12 26" aria-hidden="true">
              <path d="M0 4l11 6-3 8 3 6H0z" fill="#1e4a3c" />
              <path d="M0 19l6-6 2 5z" fill="#8cc4b0" />
            </svg>
            {'无标题 - ArcMap'}
          </TitleText>
          <TitleGlow />
          <WindowButtons />
        </TitleBar>
        <MenuBar>
          {MENUS.map(menu => <MenuItem key={menu}>{menu}</MenuItem>)}
        </MenuBar>

        <ToolbarRow>
          <Toolbar $width={604} $start={4}>
            <Tools items={['newDoc', 'open', 'save', 'print', '|', 'cut', 'copy', 'paste', 'remove', '|', 'undo', 'redo', '|', 'addData', 'v']} />
            <Overflow more />
          </Toolbar>
          <Toolbar $width={410}>
            <Grip />
            <LabelButton>Spatial Adjustment</LabelButton>
            <Tools items={['|', 'pointer', 'linkAdd', 'linkEdit', 'rotateLink']} />
            <Overflow more />
          </Toolbar>
          <Toolbar $grow>
            <Grip />
            <LabelButton>Georeferencing</LabelButton>
          </Toolbar>
        </ToolbarRow>

        <ToolbarRow>
          <Toolbar $width={862} $start={2}>
            <Tools
              items={[
                'zoomIn', 'zoomOut', 'pan', 'globe', '|', 'shrink', 'expand', '|', 'back', 'forward', '|',
                'selectFeature', 'v', 'clearSelect', '|', 'pointer', '|', 'identify', 'hyperlink', 'popup', '|',
                'measure', '|', 'find', 'route', 'goToXY', '|', 'time', '|', 'viewer',
              ]}
            />
            <Overflow />
          </Toolbar>
          <Toolbar $grow>
            <Grip />
            <LabelButton>Editor</LabelButton>
            <Tools
              active="editTool"
              items={['|', 'editTool', 'editNote', '|', 'line', 'arc', 'trapezoid', '-', 'burst', '|', 'greenBox']}
            />
          </Toolbar>
        </ToolbarRow>

        <ToolbarRow $indent={56} $height={46}>
          <Toolbar $width={888}>
            <Grip />
            <LabelButton>3D Analyst</LabelButton>
            <Tools items={['hammer', '|']} />
            <Combo label="3D Analyst layer" width={294} />
            <Tools
              items={[
                'contour', 'steepPath', 'sight', 'interpolatePoint', 'interpolateLine', 'interpolatePolygon', '|',
                'scatter', 'v', '|', 'scene', '|', 'arcGlobe',
              ]}
            />
            <Overflow />
          </Toolbar>
          <Toolbar $grow>
            <Grip $tight />
            <Combo label="Layer" width={290} />
          </Toolbar>
        </ToolbarRow>

        <ToolbarRow $indent={392}>
          <Toolbar $width={544}>
            <Grip $tight />
            <Tools
              items={[
                'topologyBox', '|', 'topologyEdit', 'v', '|', 'topoA', 'topoB', 'alignEdge', 'corner', '|',
                'planarize', '|', 'validate', 'validateList', '|', 'fixError', 'inspectError', 'errorTable',
              ]}
            />
            <Overflow />
          </Toolbar>
        </ToolbarRow>

        <Workspace>
          <ContentsPanel>
            <PanelHeader>
              <PanelTitle>Table Of Contents</PanelTitle>
              <PanelButton aria-label="Auto hide"><Icon name="pin" size={22} /></PanelButton>
              <PanelButton aria-label="Close"><Icon name="close" size={22} /></PanelButton>
            </PanelHeader>
            <PanelTools>
              <Tools
                active="listDrawing"
                items={['listDrawing', 'listSource', 'listVisible', 'listSelection', '|', 'options']}
              />
            </PanelTools>
            <Tree>
              <TreeRow $indent={2} $gap={10}>
                <Expander $open aria-label="Expand Layers" />
                <Icon name="layerStack" />
                <GroupLabel>Layers</GroupLabel>
              </TreeRow>
              {LAYERS.map(renderRow)}
            </Tree>
          </ContentsPanel>
          <MapView>
            <MapDrawing />
          </MapView>
        </Workspace>
      </Window>
    </>
  );
};

export default App;
